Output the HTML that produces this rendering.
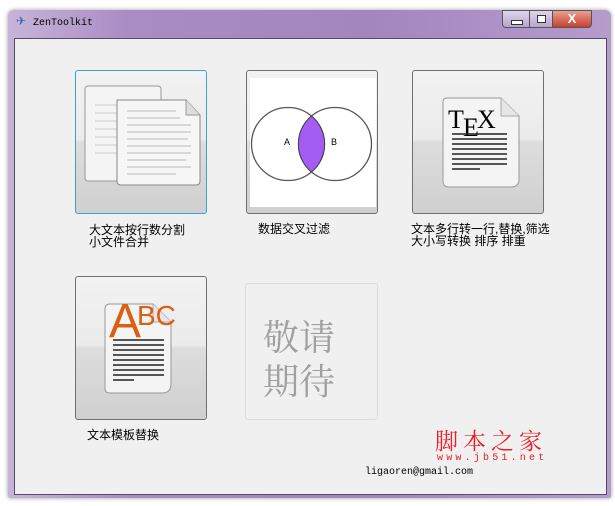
<!DOCTYPE html>
<html><head><meta charset="utf-8"><style>
body{margin:0;width:615px;height:506px;background:#fff;position:relative;overflow:hidden;font-family:"Liberation Sans","Noto Sans CJK SC",sans-serif}
.win{position:absolute;left:8px;top:10px;width:603px;height:488px;background:linear-gradient(90deg,#c8b4d8,#a88cc4 20%,#a286c0 60%,#b49ccc);border-radius:6px 6px 2px 2px;box-shadow:0 0 4px rgba(0,0,0,.4)}
.client{position:absolute;left:14px;top:38px;width:591px;height:455px;background:#f0f0f0;border:1px solid #5a4a6a}
.t{position:absolute;font-size:12px;color:#000;line-height:12px}
.btn{position:absolute;border:1px solid #707070;border-radius:3px;background:linear-gradient(#f2f2f2 0,#ebebeb 48%,#dddddd 50%,#d0d0d0 100%);box-sizing:border-box}
</style></head><body>
<div class="win"></div>
<div style="position:absolute;left:16px;top:14px;width:14px;height:14px;color:#3a6ab0;font-size:12px">✈</div>
<div style="position:absolute;left:33px;top:18px;font-family:'Liberation Mono',monospace;font-size:10px">ZenToolkit</div>
<div style="position:absolute;left:502px;top:10px;width:28px;height:18px;border:1px solid #555;border-radius:0 0 0 4px;background:linear-gradient(#e0d4ec,#b8a4cc);box-sizing:border-box"><div style="position:absolute;left:8px;top:9px;width:10px;height:3px;border:1px solid #333;background:#fff"></div></div>
<div style="position:absolute;left:529px;top:10px;width:24px;height:18px;border:1px solid #555;background:linear-gradient(#e0d4ec,#b8a4cc);box-sizing:border-box"><div style="position:absolute;left:7px;top:4px;width:7px;height:6px;border:1px solid #333;background:#fff"></div></div>
<div style="position:absolute;left:552px;top:10px;width:40px;height:18px;border:1px solid #555;border-radius:0 0 4px 0;background:linear-gradient(#e8a090,#c84030);box-sizing:border-box;color:#fff;font-weight:bold;font-size:13px;text-align:center;line-height:16px">X</div>
<div class="client"></div>

<div class="btn" style="left:75px;top:70px;width:132px;height:144px;border-color:#3ca0dc">
<svg width="130" height="142" style="position:absolute;left:0;top:0">
<rect x="9" y="15" width="76" height="95" rx="3" fill="#f4f4f4" stroke="#999"/>
<g stroke="#ccc"><line x1="19" y1="34" x2="78" y2="34"/><line x1="19" y1="42" x2="78" y2="42"/><line x1="19" y1="50" x2="78" y2="50"/><line x1="19" y1="58" x2="78" y2="58"/><line x1="19" y1="66" x2="78" y2="66"/><line x1="19" y1="74" x2="78" y2="74"/><line x1="19" y1="82" x2="78" y2="82"/></g>
<path d="M41 29 H110 L124 44 V110 Q124 114 120 114 H45 Q41 114 41 110 Z" fill="#f6f6f6" stroke="#888"/>
<path d="M110 29 V44 H124" fill="#ddd" stroke="#999"/>
<g stroke="#bbb"><line x1="51" y1="40" x2="100" y2="40"/><line x1="51" y1="47" x2="104" y2="47"/><line x1="51" y1="54" x2="115" y2="54"/><line x1="51" y1="61" x2="115" y2="61"/><line x1="51" y1="68" x2="112" y2="68"/><line x1="51" y1="75" x2="115" y2="75"/><line x1="51" y1="82" x2="115" y2="82"/><line x1="51" y1="89" x2="110" y2="89"/><line x1="51" y1="96" x2="115" y2="96"/><line x1="51" y1="103" x2="100" y2="103"/></g>
</svg></div>
<div class="t" style="left:89px;top:224px">大文本按行数分割<br>小文件合并</div>

<div class="btn" style="left:246px;top:70px;width:132px;height:144px">
<svg width="130" height="142" style="position:absolute;left:0;top:0">
<rect x="3" y="7" width="126" height="129" fill="#fff"/>
<circle cx="41" cy="73" r="36.5" fill="none" stroke="#555" stroke-width="1.3"/>
<circle cx="88" cy="73" r="36.5" fill="none" stroke="#555" stroke-width="1.3"/>
<path d="M64.5 45 A36.5 36.5 0 0 1 64.5 101 A36.5 36.5 0 0 1 64.5 45Z" fill="#a55cf5" stroke="#444"/>
<text x="37" y="74" font-size="9" font-family="Liberation Sans">A</text><text x="84" y="74" font-size="9" font-family="Liberation Sans">B</text>
</svg></div>
<div class="t" style="left:258px;top:223px">数据交叉过滤</div>

<div class="btn" style="left:412px;top:70px;width:132px;height:144px">
<svg width="130" height="142" style="position:absolute;left:0;top:0">
<path d="M34 27 H88 L106 45 V108 Q106 116 98 116 H36 Q30 116 30 110 V31 Q30 27 34 27Z" fill="#f4f4f4" stroke="#999"/>
<path d="M88 27 V45 H106" fill="#e6e6e6" stroke="#aaa"/>
<text x="35" y="57" font-size="26" font-family="Liberation Serif">T</text><text x="50" y="65" font-size="26" font-family="Liberation Serif">E</text><text x="64" y="57" font-size="26" font-family="Liberation Serif">X</text>
<g stroke="#222" stroke-width="1.5"><line x1="39" y1="63" x2="94" y2="63"/><line x1="39" y1="68" x2="94" y2="68"/><line x1="39" y1="73" x2="94" y2="73"/><line x1="39" y1="78" x2="94" y2="78"/><line x1="39" y1="83" x2="94" y2="83"/><line x1="39" y1="88" x2="94" y2="88"/><line x1="39" y1="93" x2="94" y2="93"/><line x1="39" y1="98" x2="67" y2="98"/></g>
</svg></div>
<div class="t" style="left:411px;top:223px">文本多行转一行,替换,筛选<br>大小写转换 排序 排重</div>

<div class="btn" style="left:75px;top:276px;width:132px;height:144px">
<svg width="130" height="142" style="position:absolute;left:0;top:0">
<path d="M34 27 H77 L95 45 V107 Q95 116 86 116 H34 Q29 116 29 111 V32 Q29 27 34 27Z" fill="#f4f4f4" stroke="#999"/>
<path d="M77 27 V45 H95" fill="#e6e6e6" stroke="#aaa"/>
<g stroke="#222" stroke-width="1.4"><line x1="37" y1="63" x2="88" y2="63"/><line x1="37" y1="68" x2="88" y2="68"/><line x1="37" y1="73" x2="88" y2="73"/><line x1="37" y1="78" x2="88" y2="78"/><line x1="37" y1="83" x2="88" y2="83"/><line x1="37" y1="88" x2="88" y2="88"/><line x1="37" y1="93" x2="88" y2="93"/><line x1="37" y1="98" x2="88" y2="98"/><line x1="37" y1="103" x2="58" y2="103"/></g>
<text x="61" y="48" font-size="28" fill="#d95f12" font-family="Liberation Sans">BC</text>
<text x="33" y="60" font-size="48" fill="#d95f12" font-family="Liberation Sans">A</text>
</svg></div>
<div class="t" style="left:87px;top:429px">文本模板替换</div>

<div style="position:absolute;left:245px;top:283px;width:133px;height:137px;border:1px solid #d8dce4;border-radius:3px;box-sizing:border-box;background:#f0f0f0;color:#a0a0a0;font-size:36px;line-height:44px;padding-left:17px;padding-top:30px;font-family:'Noto Serif CJK SC',serif">敬请<br>期待</div>

<div style="position:absolute;left:435px;top:423px;font-size:23px;color:#e8202a;letter-spacing:5px;font-family:'Noto Serif CJK SC',serif;white-space:nowrap">脚本之家</div>
<div style="position:absolute;left:437px;top:453px;font-size:10px;color:#e8202a;letter-spacing:3.2px;font-family:'Liberation Mono',monospace">www.jb51.net</div>
<div style="position:absolute;left:365px;top:467px;font-size:10px;font-family:'Liberation Mono',monospace">ligaoren@gmail.com</div>
</body></html>
